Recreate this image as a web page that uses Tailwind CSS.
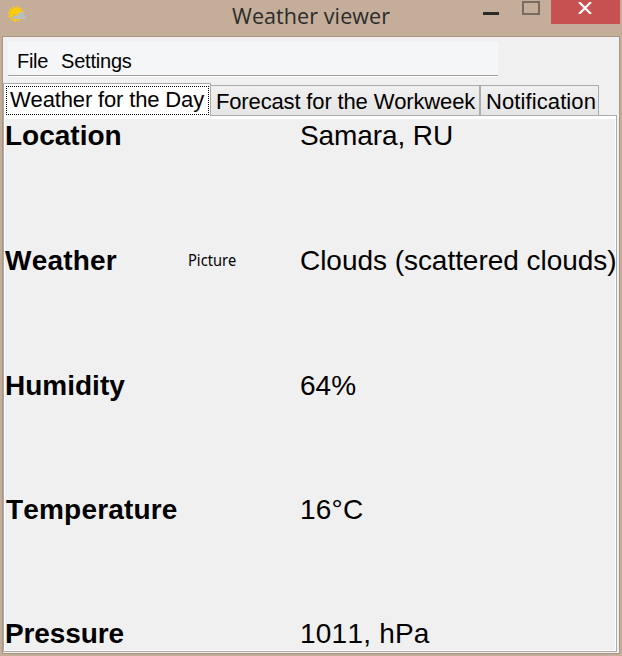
<!DOCTYPE html>
<html lang="en">
<head>
<meta charset="utf-8">
<title>Weather viewer</title>
<script src="https://cdn.jsdelivr.net/npm/@tailwindcss/browser@4"></script>
</head>
<body class="h-[656px] w-[622px] overflow-hidden bg-[#c4ae9a] font-['Liberation_Sans',Arial,sans-serif] text-black">
<header class="flex h-9 items-start">
  <svg class="mt-[5px] ml-[7px] h-[19px] w-[20px] shrink-0" viewBox="0 0 20 19">
    <circle cx="9" cy="9" r="7.2" fill="none" stroke="#ffcc00" stroke-width="1.6" stroke-dasharray="2.2 1.57"/>
    <circle cx="9" cy="9" r="6.2" fill="#ffcc00"/>
    <path d="M5.500 13.500v-2l1-1.500h2" fill="none" stroke="#c4ae9a" stroke-width="1"/>
    <path d="M6 14v-2l1-1h3V9l2-1 1-1h3l1 1v2l2 1v3z" fill="#bdbdbd"/>
  </svg>
  <h1 class="ml-[205px] w-[251px] font-['Open_Sans','Noto_Sans',sans-serif] text-[21.5px] leading-8 tracking-[0.08px] whitespace-nowrap text-[#2b2b2b]">Weather viewer</h1>
  <div class="mt-3 h-[3px] w-4 bg-[#2a2a2a]"></div>
  <div class="mt-px ml-[23px] h-[14px] w-[18px] border-2 border-[#786b5f]"></div>
  <div class="ml-[11px] flex h-6 w-[69px] justify-center bg-[#c75050]">
    <svg class="mt-[2px] mr-px h-3 w-[14px]" viewBox="0 0 14 12"><path d="M1 0l12 12M13 0L1 12" stroke="#fff" stroke-width="2.2"/></svg>
  </div>
</header>
<main class="ml-[2px] flex h-[618px] w-[618px] flex-col border border-[#a89584] bg-[#f0f0f0] [font-kerning:none]">
  <nav class="mt-[5px] ml-[5px] flex h-[35px] w-[490px] shrink-0 gap-[13px] border-b border-white bg-[#f5f6f8] pl-[9px] text-[20px] leading-[38px] shadow-[inset_0_-1px_#a0a0a0]">
    <span class="w-[31px] tracking-[-0.3px]">File</span><span class="tracking-[-0.2px]">Settings</span>
  </nav>
  <div class="mt-[6px] flex h-8 shrink-0 items-end text-[22px] whitespace-nowrap">
    <div class="z-10 -mb-px h-[33px] w-[208px] border border-b-0 border-[#acacac] bg-white px-[2px] pt-[2px]">
      <div class="relative h-[29px] w-[203px] pl-1 leading-[27px] tracking-[-0.15px]">Weather for the Day
        <svg class="absolute inset-0 h-[29px] w-[203px]" viewBox="0 0 203 29"><path d="M0 .5H203M0 28.500H203M.5 0V29M202.500 0V29" fill="none" stroke="#000" stroke-dasharray="1 1"/></svg>
      </div>
    </div>
    <div class="h-[30px] w-[269px] border border-b-0 border-l-0 border-[#acacac] bg-linear-to-b from-[#f0f0f0] to-[#e5e5e5] pl-[5px] leading-[32px] tracking-[-0.15px]">Forecast for the Workweek</div>
    <div class="h-[30px] w-[119px] border border-b-0 border-[#acacac] bg-linear-to-b from-[#f0f0f0] to-[#e5e5e5] pl-[5px] leading-[32px] tracking-[0.1px]">Notification</div>
  </div>
  <section class="h-[537px] w-[614px] border border-[#acacac]">
    <div class="grid h-[535px] grid-cols-[183px_112px_1fr] grid-rows-[125px_125px_124px_124px_34px] border-t-[3px] border-r border-b border-l border-white text-[28px] leading-[34px] whitespace-nowrap">
      <b>Location</b><span></span><span class="tracking-[-0.1px]">Samara, RU</span>
      <b class="tracking-[0.2px]">Weather</b><span class="font-['Noto_Sans','Open_Sans',sans-serif] text-[16px] leading-[33px]"><span class="inline-block origin-left scale-x-[0.915]">Picture</span></span><span class="tracking-[-0.04px]">Clouds (scattered clouds)</span>
      <b>Humidity</b><span></span><span>64%</span>
      <b class="pl-px tracking-[0.18px]">Temperature</b><span></span><span class="tracking-[0.2px]">16°C</span>
      <b class="tracking-[-0.1px]">Pressure</b><span></span><span class="tracking-[0.22px]">1011, hPa</span>
    </div>
  </section>
</main>
</body>
</html>
